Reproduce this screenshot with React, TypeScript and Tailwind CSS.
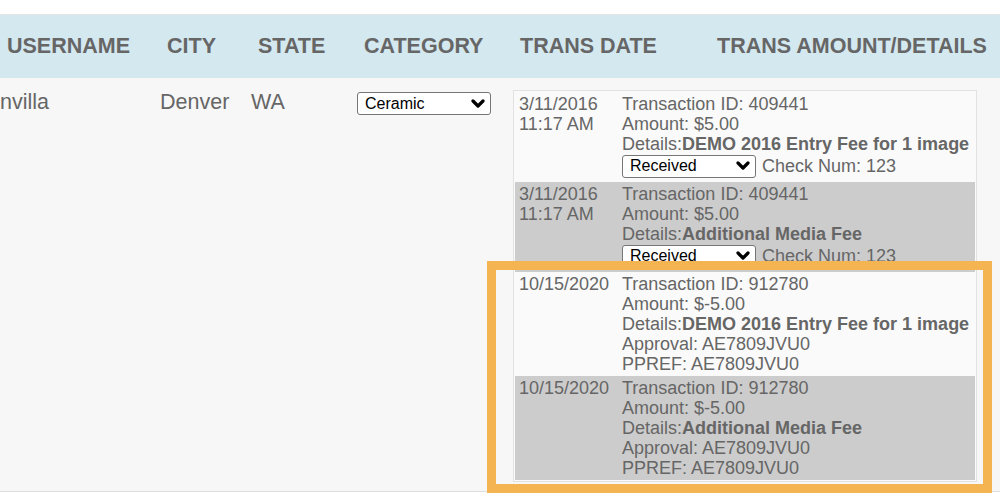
type Txn = {
  date: string;
  time?: string;
  id: string;
  amount: string;
  details: string;
  check?: string;
  approval?: string;
  shaded: boolean;
};

const txns: Txn[] = [
  { date: "3/11/2016", time: "11:17 AM", id: "409441", amount: "$5.00", details: "DEMO 2016 Entry Fee for 1 image", check: "123", shaded: false },
  { date: "3/11/2016", time: "11:17 AM", id: "409441", amount: "$5.00", details: "Additional Media Fee", check: "123", shaded: true },
  { date: "10/15/2020", id: "912780", amount: "$-5.00", details: "DEMO 2016 Entry Fee for 1 image", approval: "AE7809JVU0", shaded: false },
  { date: "10/15/2020", id: "912780", amount: "$-5.00", details: "Additional Media Fee", approval: "AE7809JVU0", shaded: true },
];

function Chevron() {
  return (
    <svg width="14" height="10" viewBox="0 0 14 10" className="shrink-0">
      <path d="M2 2 L7 7 L12 2" fill="none" stroke="#000" strokeWidth="3.2" strokeLinecap="round" strokeLinejoin="round" />
    </svg>
  );
}

function FakeSelect({ label, className }: { label: string; className?: string }) {
  return (
    <div
      className={`flex items-center justify-between h-[23px] pl-[7px] pr-[5px] bg-white border border-[#767676] rounded-[3px] text-[16px] leading-none text-black ${className ?? ""}`}
    >
      <span>{label}</span>
      <Chevron />
    </div>
  );
}

function TxnRow({ t }: { t: Txn }) {
  return (
    <div className={`flex pt-[2px] pb-[2px] ${t.shaded ? "bg-[#cccccc]" : "bg-[#fafafa]"}`}>
      <div className="w-[107px] pl-[4px] shrink-0">
        <div>{t.date}</div>
        {t.time && <div>{t.time}</div>}
      </div>
      <div className="flex-1">
        <div>Transaction ID: {t.id}</div>
        <div>Amount: {t.amount}</div>
        <div>
          Details:<b className="font-bold">{t.details}</b>
        </div>
        {t.check && (
          <div className="flex items-center gap-[6px] h-[24px] mb-[2px]">
            <FakeSelect label="Received" className="w-[134px]" />
            <span>Check Num: {t.check}</span>
          </div>
        )}
        {t.approval && (
          <>
            <div>Approval: {t.approval}</div>
            <div>PPREF: {t.approval}</div>
          </>
        )}
      </div>
    </div>
  );
}

export default function App() {
  const headCell = "pl-[7px] flex items-center";
  return (
    <div className="relative w-[1000px] h-[500px] overflow-hidden bg-white font-[family-name:'Liberation_Sans',Arial,sans-serif] text-[#666666]">
      <div className="h-[14px]" />
      <div className="border-t border-[#e4e4e4] bg-[#d4e8f0] h-[64px] grid grid-cols-[160px_91px_106px_156px_197px_1fr] text-[21.5px] font-bold text-[#666666] whitespace-nowrap">
        <div className={headCell}>USERNAME</div>
        <div className={headCell}>CITY</div>
        <div className={headCell}>STATE</div>
        <div className={headCell}>CATEGORY</div>
        <div className={headCell}>TRANS DATE</div>
        <div className={headCell}>TRANS AMOUNT/DETAILS</div>
      </div>
      <div className="bg-[#f7f7f7] border-b border-[#dddddd] h-[414px] grid grid-cols-[160px_91px_106px_156px_1fr] pt-[12px] text-[21.5px] leading-[24px]">
        <div>nvilla</div>
        <div>Denver</div>
        <div>WA</div>
        <div className="pt-[2px]">
          <FakeSelect label="Ceramic" className="w-[134px]" />
        </div>
        <div className="pr-[23px]">
          <div className="border border-[#e2e2e2] p-[1px] bg-[#fafafa] text-[18px] leading-[20px] text-[#666666] whitespace-nowrap">
            {txns.map((t, i) => (
              <TxnRow key={i} t={t} />
            ))}
          </div>
        </div>
      </div>
      <div className="absolute left-[487px] top-[261px] w-[505px] h-[232px] border-[9px] border-[#f5b452]" />
    </div>
  );
}
